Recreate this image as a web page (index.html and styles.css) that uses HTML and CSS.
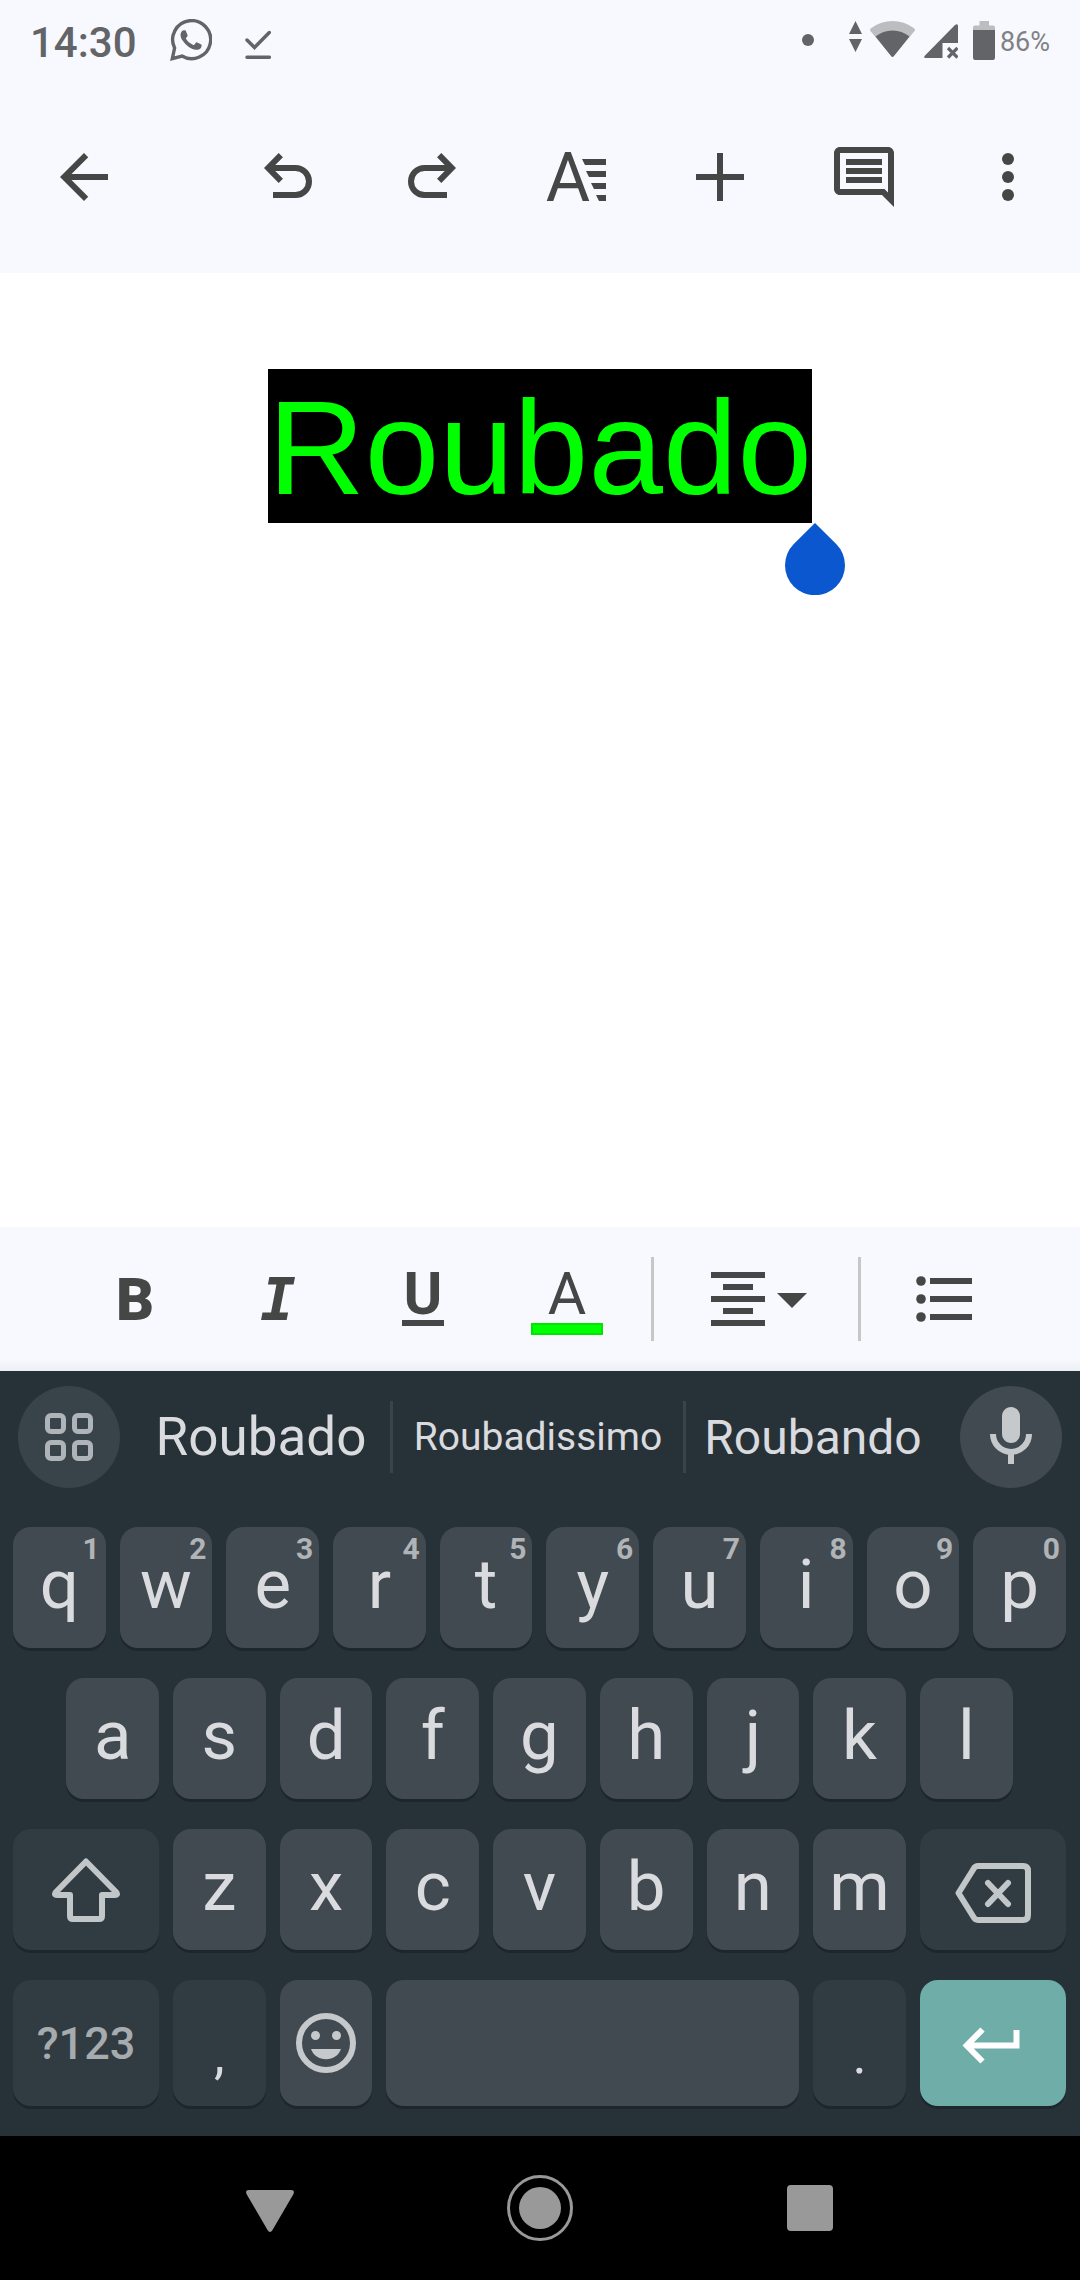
FILE: index.html
```html
<!DOCTYPE html>
<html lang="pt-BR">
<head>
<meta charset="utf-8">
<meta name="viewport" content="width=device-width, initial-scale=1">
<title>Documento</title>
<link rel="stylesheet" href="styles.css">
</head>
<body>
<header class="status">
  <div class="status-side status-left">
    <time class="clock">14:30</time>
    <svg class="chat-app" width="42" height="43" viewBox="0 0 42 43" aria-hidden="true"><path d="M12 37A19 19 0 1 0 4.6 29L2.3 39.6Z" fill="none" stroke="currentColor" stroke-width="3.4"/><path transform="scale(1.75)" fill="currentColor" d="M17.472 14.382c-.297-.149-1.758-.867-2.03-.967-.273-.099-.471-.148-.67.15-.197.297-.767.966-.94 1.164-.173.199-.347.223-.644.075-.297-.15-1.255-.463-2.39-1.475-.883-.788-1.48-1.761-1.653-2.059-.173-.297-.018-.458.13-.606.134-.133.298-.347.446-.52.149-.174.198-.298.298-.497.099-.198.05-.371-.025-.52-.075-.149-.669-1.612-.916-2.207-.242-.579-.487-.5-.669-.51-.173-.008-.371-.01-.57-.01-.198 0-.52.074-.792.372-.272.297-1.04 1.016-1.04 2.479 0 1.462 1.065 2.875 1.213 3.074.149.198 2.096 3.2 5.077 4.487.709.306 1.262.489 1.694.625.712.227 1.36.195 1.871.118.571-.085 1.758-.719 2.006-1.413.248-.694.248-1.289.173-1.413-.074-.124-.272-.198-.57-.347z"/></svg>
    <svg width="26" height="43" viewBox="0 0 26 43" fill="none" stroke="currentColor" stroke-width="3.5" stroke-linecap="round" aria-hidden="true"><path d="M2 21l7.5 7.500L24.300 13.500M2 38.200H24.300"/></svg>
  </div>
  <div class="status-side">
    <svg class="dot" width="12" height="43" viewBox="0 0 12 43" fill="currentColor" aria-hidden="true"><circle cx="6" cy="21" r="6"/></svg>
    <svg class="traffic" width="13" height="43" viewBox="0 0 13 43" fill="currentColor" aria-hidden="true"><path d="M6.500 2L13 15H0zM0 20H13L6.500 33z"/></svg>
    <svg class="wifi" width="45" height="43" viewBox="0 0 45 43" aria-hidden="true"><path fill="#bcbdc1" d="M22.500 38L.4 12Q-.6 10.200 1 9.200Q11 2 22.500 2T44 9.200Q45.600 10.200 44.600 12z"/><path fill="currentColor" d="M5.500 17.500Q13 11.500 22.500 11.500T39.500 17.500L24 37q-1.500 2-3 0z"/></svg>
    <svg class="signal" width="34" height="43" viewBox="0 0 34 43" aria-hidden="true"><path fill="currentColor" d="M1.500 39Q-1 39 1 36.500L31 6Q34 4 34 7V24H18.500V39z"/><path stroke="currentColor" stroke-width="3.200" d="M24 29l9.500 9.500M33.500 29L24 38.500"/></svg>
    <svg class="battery" width="22" height="43" viewBox="0 0 22 43" aria-hidden="true"><path fill="#bcbdc1" d="M6.500 2h9.500v4.500h4q2 0 2 2V13H0V8.500q0-2 2-2h4.500z"/><path fill="currentColor" d="M0 11H22V38.500q0 2.500-2 2.500H2q-2 0-2-2.500z"/></svg>
    <span class="percent">86%</span>
  </div>
</header>

<nav class="toolbar" aria-label="Documento">
  <button class="tool back" aria-label="Voltar"><svg class="icon" viewBox="0 0 24 24"><path d="M20 11H7.830l5.590-5.590L12 4l-8 8 8 8 1.410-1.410L7.830 13H20z"/></svg></button>
  <button class="tool" aria-label="Desfazer"><svg class="icon line" viewBox="0 0 24 24"><path d="M9.600 4.700L5.400 9l4.200 4.300M5.400 9H14.500a4.500 4.500 0 0 1 0 9H7"/></svg></button>
  <button class="tool" aria-label="Refazer"><svg class="icon line" viewBox="0 0 24 24"><path d="M14.400 4.700L18.600 9l-4.200 4.300M18.600 9H9.500a4.500 4.500 0 0 0 0 9H17"/></svg></button>
  <button class="tool" aria-label="Formatar"><svg class="icon" viewBox="0 0 72 72"><text class="glyph-large" x="28" y="60">A</text><path d="M42 18H66V24H45zM46 30H66V36H49zM51 42H66V48H54zM56 54H66V60H59z"/></svg></button>
  <button class="tool" aria-label="Inserir"><svg class="icon" viewBox="0 0 24 24"><path d="M20 13h-7v7h-2v-7H4v-2h7V4h2v7h7z"/></svg></button>
  <button class="tool" aria-label="Comentários"><svg class="icon" viewBox="0 0 24 24"><path fill-rule="evenodd" d="M22 4c0-1.100-.9-2-2-2H4c-1.100 0-2 .9-2 2v12c0 1.100.9 2 2 2h14l4 4zM20 17.170L18.830 16H4V4h16z"/><path d="M6 6h12v2H6zM6 9h12v2H6zM6 12h12v2H6z"/></svg></button>
  <button class="tool" aria-label="Mais opções"><svg class="icon" viewBox="0 0 24 24"><circle cx="12" cy="6" r="2"/><circle cx="12" cy="12" r="2"/><circle cx="12" cy="18" r="2"/></svg></button>
</nav>

<main class="page">
  <p class="selection">Roubado<svg class="handle" width="60" height="72" viewBox="0 0 60 72" aria-hidden="true"><path fill="#0b57d0" d="M30 0L51.200 21A30 30 0 1 1 8.800 21z"/></svg></p>
</main>

<div class="format" role="toolbar" aria-label="Formatação">
  <button class="tool" aria-label="Negrito"><svg class="icon" viewBox="0 0 72 72"><text class="glyph bold" x="36" y="57">B</text></svg></button>
  <button class="tool" aria-label="Itálico"><svg class="icon" viewBox="0 0 72 72"><text class="glyph italic" x="35" y="57">I</text></svg></button>
  <button class="tool" aria-label="Sublinhado"><svg class="icon" viewBox="0 0 72 72"><text class="glyph underlined" x="36" y="51">U</text><path d="M15 57h42v6H15z"/></svg></button>
  <button class="tool" aria-label="Cor do texto"><svg class="icon" viewBox="0 0 72 72"><text class="glyph" x="36" y="51">A</text><rect x="1" y="61" width="70" height="10" fill="#00ff00" stroke="#00e600" stroke-width="2"/></svg></button>
  <span class="rule"></span>
  <button class="tool align" aria-label="Alinhamento"><svg class="icon" viewBox="0 0 24 24"><path d="M3 3h18v2H3zM7 7h10v2H7zM3 11h18v2H3zM7 15h10v2H7zM3 19h18v2H3z"/></svg><svg class="caret" viewBox="0 0 30 72"><path d="M0 30H30L15 45z"/></svg></button>
  <span class="rule"></span>
  <button class="tool" aria-label="Lista com marcadores"><svg class="icon" viewBox="0 0 24 24"><circle cx="4" cy="6" r="1.600"/><circle cx="4" cy="12" r="1.600"/><circle cx="4" cy="18" r="1.600"/><path d="M7 5h14v2H7zM7 11h14v2H7zM7 17h14v2H7z"/></svg></button>
</div>

<section class="keyboard" aria-label="Teclado">
  <div class="strip">
    <button class="round" aria-label="Ferramentas"><svg width="48" height="48" viewBox="0 0 48 48" fill="none" stroke="#aeb4b7" stroke-width="5"><rect x="2.500" y="2.500" width="16" height="16" rx="3.500"/><rect x="29.500" y="2.500" width="16" height="16" rx="3.500"/><rect x="2.500" y="29.500" width="16" height="16" rx="3.500"/><rect x="29.500" y="29.500" width="16" height="16" rx="3.500"/></svg></button>
    <div class="suggestions">
      <button class="suggestion">Roubado</button>
      <span class="split"></span>
      <button class="suggestion long">Roubadissimo</button>
      <span class="split"></span>
      <button class="suggestion medium">Roubando</button>
    </div>
    <button class="round mic" aria-label="Entrada de voz"><svg width="72" height="72" viewBox="0 0 24 24"><path fill="#c5c9cc" d="M12 14c1.660 0 3-1.340 3-3V5c0-1.660-1.340-3-3-3S9 3.340 9 5v6c0 1.660 1.340 3 3 3z"/><path fill="none" stroke="#c5c9cc" stroke-width="2" d="M6 11a6 6 0 0 0 12 0M12 17v4"/></svg></button>
  </div>
  <div class="keys">
    <div class="row">
      <button class="key">q<sup class="alt">1</sup></button>
      <button class="key">w<sup class="alt">2</sup></button>
      <button class="key">e<sup class="alt">3</sup></button>
      <button class="key">r<sup class="alt">4</sup></button>
      <button class="key">t<sup class="alt">5</sup></button>
      <button class="key">y<sup class="alt">6</sup></button>
      <button class="key">u<sup class="alt">7</sup></button>
      <button class="key">i<sup class="alt">8</sup></button>
      <button class="key">o<sup class="alt">9</sup></button>
      <button class="key">p<sup class="alt">0</sup></button>
    </div>
    <div class="row">
      <button class="key indent">a</button>
      <button class="key">s</button>
      <button class="key">d</button>
      <button class="key">f</button>
      <button class="key">g</button>
      <button class="key">h</button>
      <button class="key">j</button>
      <button class="key">k</button>
      <button class="key">l</button>
    </div>
    <div class="row">
      <button class="key wide dim picture" aria-label="Shift"><svg width="72" height="72" viewBox="0 0 72 72" fill="none" stroke="#c1c6c9" stroke-width="6" stroke-linejoin="round"><path d="M36 7.500L5.500 38.500Q4 41 7 41H20V62q0 3 3 3H49q3 0 3-3V41H65Q68 41 66.500 38.500Z"/></svg></button>
      <button class="key">z</button>
      <button class="key">x</button>
      <button class="key">c</button>
      <button class="key">v</button>
      <button class="key">b</button>
      <button class="key">n</button>
      <button class="key">m</button>
      <button class="key wide dim picture" aria-label="Apagar"><svg width="76" height="66" viewBox="0 -6 76 66" fill="none" stroke="#c1c6c9" stroke-width="6" stroke-linecap="round" stroke-linejoin="round"><path d="M23 3H68q5 0 5 5V52q0 5-5 5H23q-3 0-4.500-3L3.500 30L18.500 6Q20 3 23 3zM33 20L53 41M53 20L33 41"/></svg></button>
    </div>
    <div class="row last">
      <button class="key wide dim symbols">?123</button>
      <button class="key dim mark">,</button>
      <button class="key picture" aria-label="Emoji"><svg width="72" height="72" viewBox="0 0 24 24" fill="#c5c9cc"><circle cx="12" cy="12" r="9" fill="none" stroke="#c5c9cc" stroke-width="2"/><circle cx="8.500" cy="9.500" r="1.500"/><circle cx="15.500" cy="9.500" r="1.500"/><path d="M7 14H17C16.200 16.200 14.300 17.400 12 17.400S7.800 16.200 7 14z"/></svg></button>
      <button class="key space" aria-label="Espaço"></button>
      <button class="key dim mark">.</button>
      <button class="key wide enter picture" aria-label="Enter"><svg width="72" height="72" viewBox="0 0 72 72" fill="none" stroke="#fff" stroke-width="6"><path d="M59.500 23V38.500H10M25.500 22.500L9.700 38.500L25.500 54.500"/></svg></button>
    </div>
  </div>
</section>

<nav class="system" aria-label="Sistema">
  <button class="system-key" aria-label="Voltar"><svg width="48" height="66" viewBox="0 0 48 66" fill="#999"><path d="M3 15H45Q49 15 47.500 19L26.500 55Q24 59 21.500 55L.5 19Q-1 15 3 15z"/></svg></button>
  <button class="system-key" aria-label="Início"><svg width="66" height="66" viewBox="0 0 66 66"><circle cx="33" cy="33" r="31.500" fill="none" stroke="#999" stroke-width="3"/><circle cx="33" cy="33" r="21" fill="#999"/></svg></button>
  <button class="system-key" aria-label="Recentes"><svg width="46" height="66" viewBox="0 0 46 66"><rect y="10" width="46" height="46" rx="4" fill="#999"/></svg></button>
</nav>
</body>
</html>
```
FILE: styles.css
```css
* {
  box-sizing: border-box;
}

body {
  margin: 0;
  min-height: 100vh;
  display: flex;
  flex-direction: column;
  background: #fff;
  color: #444746;
  font-family: Roboto, sans-serif;
}

button {
  margin: 0;
  padding: 0;
  border: 0;
  background: none;
  color: inherit;
  font: inherit;
}

svg {
  display: block;
  flex: none;
}

/* Status bar */
.status {
  height: 81px;
  padding: 0 30px;
  display: flex;
  justify-content: space-between;
  align-items: center;
  background: #f8f9fe;
  color: #636467;
}

.status-side {
  display: flex;
  align-items: center;
}

.status-left {
  gap: 33px;
}

.clock {
  padding-top: 3px;
  font-size: 42px;
  font-weight: 500;
}

.dot {
  margin-right: 35px;
}

.traffic {
  margin-right: 8px;
}

.wifi {
  margin-right: 9px;
}

.signal {
  margin-right: 15px;
}

.battery {
  margin-right: 5px;
}

.percent {
  padding-top: 3px;
  font-size: 27px;
  color: #808184;
}

/* Toolbars */
.toolbar {
  height: 192px;
  padding-left: 12px;
  display: flex;
  align-items: center;
  background: #f8f9fe;
}

.tool {
  width: 144px;
  height: 144px;
  display: flex;
  align-items: center;
  justify-content: center;
}

.back {
  margin-right: auto;
}

.icon {
  width: 72px;
  height: 72px;
  fill: currentColor;
  overflow: visible;
}

.line {
  fill: none;
  stroke: currentColor;
  stroke-width: 2;
}

.glyph,
.glyph-large {
  font-weight: 400;
  text-anchor: middle;
}

.glyph {
  font-size: 59px;
}

.glyph-large {
  font-size: 68px;
}

.bold {
  font-weight: 900;
}

.underlined {
  font-weight: 700;
}

.italic {
  font-family: "DejaVu Sans Mono", monospace;
  font-style: italic;
  font-weight: 700;
}

.format {
  height: 144px;
  padding-left: 63px;
  display: flex;
  align-items: center;
  background: linear-gradient(#f8f9fe 92%, #eceff3);
}

.rule {
  width: 3px;
  height: 84px;
  margin: 0 12px;
  background: #c6c7c6;
}

.align {
  width: 180px;
  gap: 3px;
  justify-content: flex-start;
  padding-left: 36px;
}

.caret {
  width: 30px;
  height: 72px;
  fill: currentColor;
}

/* Document */
.page {
  flex: 1;
  padding-top: 96px;
  display: flex;
  justify-content: center;
  align-items: flex-start;
  background: #fff;
}

.selection {
  position: relative;
  margin: 0;
  padding-top: 4px;
  background: #000;
  color: #0f0;
  font-family: "Liberation Sans", sans-serif;
  font-size: 134px;
  line-height: 150px;
}

.handle {
  position: absolute;
  top: 100%;
  right: -33px;
}

/* Keyboard */
.keyboard {
  background: #273238;
  color: #dadbde;
}

.strip {
  height: 132px;
  padding: 0 18px;
  display: flex;
  align-items: center;
  gap: 12px;
}

.round {
  width: 102px;
  height: 102px;
  flex: none;
  display: flex;
  align-items: center;
  justify-content: center;
  border-radius: 50%;
  background: #39444a;
}

.mic {
  background: #424a51;
}

.suggestions {
  flex: 1;
  padding-right: 8px;
  display: grid;
  grid-template-columns: 258fr 3px 290fr 3px 254fr;
  align-items: center;
}

.suggestion {
  height: 72px;
  font-size: 53px;
}

.long {
  font-size: 39px;
}

.medium {
  font-size: 48px;
}

.split {
  height: 72px;
  background: #39444a;
}

.keys {
  padding: 24px 7px 30px 6px;
  display: grid;
  gap: 30px;
}

.row {
  display: grid;
  grid-template-columns: repeat(20, 1fr);
}

.key {
  position: relative;
  grid-column-end: span 2;
  min-width: 0;
  height: 121px;
  margin: 0 7px;
  padding-bottom: 6px;
  border-radius: 18px;
  background: #424a51;
  box-shadow: 0 3px #1e262d;
  font-size: 69px;
  line-height: 81px;
}

.indent {
  grid-column-start: 2;
}

.wide {
  grid-column-end: span 3;
}

.space {
  grid-column-end: span 8;
}

.dim {
  background: #313b42;
}

.enter {
  background: #6fada8;
}

.last .key {
  height: 126px;
}

.picture {
  padding: 0;
  display: flex;
  align-items: center;
  justify-content: center;
}

.symbols {
  padding: 0;
  color: #a6abae;
  font-size: 45px;
  font-weight: 500;
}

.mark {
  padding: 22px 0 0;
  font-size: 54px;
}

.alt {
  position: absolute;
  top: 7px;
  right: 6px;
  color: #b0b4b7;
  font-size: 30px;
  font-weight: 700;
  line-height: 30px;
}

/* System navigation */
.system {
  height: 144px;
  padding: 0 calc(100% / 8);
  display: grid;
  grid-template-columns: repeat(3, 1fr);
  background: #000;
}

.system-key {
  display: flex;
  align-items: center;
  justify-content: center;
}
```
